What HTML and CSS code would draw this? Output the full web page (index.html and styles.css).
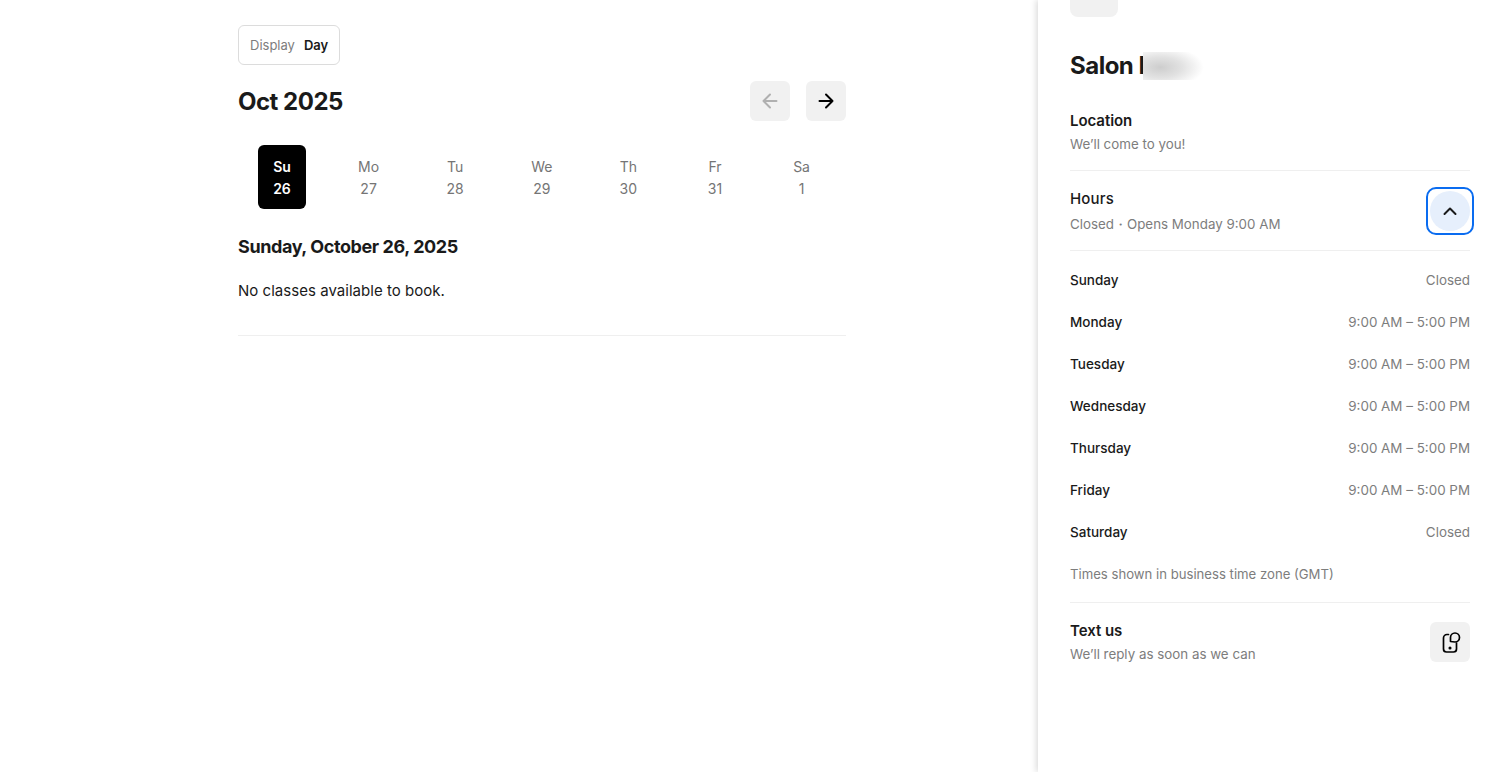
FILE: index.html
```html
<!DOCTYPE html>
<html lang="en">
<head>
<meta charset="utf-8">
<title>Salon</title>
<link rel="stylesheet" href="styles.css">
</head>
<body>
<div class="page">
  <main class="main">
    <div class="display"><span class="display-label">Display</span><span class="display-value">Day</span></div>
    <div class="month-row">
      <h1 class="month">Oct 2025</h1>
      <div class="nav">
        <button class="icon-btn disabled" aria-label="Previous"><svg width="20" height="20" viewBox="0 0 20 20" fill="none" stroke="currentColor" stroke-width="2" stroke-linecap="round" stroke-linejoin="round"><path d="M16.500 10h-13M10 3.500 3.500 10l6.500 6.500"/></svg></button>
        <button class="icon-btn" aria-label="Next"><svg width="20" height="20" viewBox="0 0 20 20" fill="none" stroke="currentColor" stroke-width="2" stroke-linecap="round" stroke-linejoin="round"><path d="M3.500 10h13M10 3.500l6.500 6.500-6.500 6.500"/></svg></button>
      </div>
    </div>
    <div class="week">
      <div class="day active"><span>Su</span><span>26</span></div>
      <div class="day"><span>Mo</span><span>27</span></div>
      <div class="day"><span>Tu</span><span>28</span></div>
      <div class="day"><span>We</span><span>29</span></div>
      <div class="day"><span>Th</span><span>30</span></div>
      <div class="day"><span>Fr</span><span>31</span></div>
      <div class="day"><span>Sa</span><span>1</span></div>
    </div>
    <h2 class="date">Sunday, October 26, 2025</h2>
    <p class="empty">No classes available to book.</p>
    <hr class="rule">
  </main>
  <aside class="side">
    <div class="tile"></div>
    <div class="name-wrap">
      <h2 class="name">Salon I</h2>
      <div class="blur"></div>
    </div>
    <section class="block location">
      <div class="title">Location</div>
      <div class="sub">We’ll come to you!</div>
    </section>
    <section class="block hours">
      <div class="hours-text">
        <div class="title regular">Hours</div>
        <div class="sub wide">Closed・Opens Monday 9:00 AM</div>
      </div>
      <button class="toggle" aria-label="Collapse hours"><span class="toggle-circle"><svg width="20" height="20" viewBox="0 0 20 20" fill="none" stroke="currentColor" stroke-width="2" stroke-linecap="round" stroke-linejoin="round"><path d="M4.500 13 10 7.500l5.500 5.500"/></svg></span></button>
    </section>
    <div class="schedule">
      <div class="row"><span class="d">Sunday</span><span class="t">Closed</span></div>
      <div class="row"><span class="d">Monday</span><span class="t">9:00 AM – 5:00 PM</span></div>
      <div class="row"><span class="d">Tuesday</span><span class="t">9:00 AM – 5:00 PM</span></div>
      <div class="row"><span class="d">Wednesday</span><span class="t">9:00 AM – 5:00 PM</span></div>
      <div class="row"><span class="d">Thursday</span><span class="t">9:00 AM – 5:00 PM</span></div>
      <div class="row"><span class="d">Friday</span><span class="t">9:00 AM – 5:00 PM</span></div>
      <div class="row"><span class="d">Saturday</span><span class="t">Closed</span></div>
      <div class="note">Times shown in business time zone (GMT)</div>
    </div>
    <section class="text-us">
      <div>
        <div class="title">Text us</div>
        <div class="sub">We’ll reply as soon as we can</div>
      </div>
      <button class="icon-btn" aria-label="Text us"><svg width="24" height="24" viewBox="0 0 24 24" fill="none" stroke="currentColor" stroke-width="1.700" stroke-linecap="round" stroke-linejoin="round"><path d="M10.500 4.500H9A3.500 3.500 0 0 0 5.500 8v11A3 3 0 0 0 8.500 22h7a3 3 0 0 0 3-3v-6"/><path d="M12.500 11.500V7.500A4.500 4.500 0 1 1 17 12z"/><circle cx="12" cy="18" r=".7" fill="currentColor"/></svg></button>
    </section>
  </aside>
</div>
</body>
</html>
```
FILE: styles.css
```css
* { box-sizing: border-box; }
html, body { margin: 0; height: 100%; overflow: hidden; background: #fff; }
body { font-family: Inter, "Liberation Sans", sans-serif; color: #1a1a1a; }
button { font: inherit; border: 0; padding: 0; cursor: pointer; }
h1, h2, p { margin: 0; }

.page { display: flex; justify-content: space-between; height: 772px; }

.main { width: 608px; margin-left: 238px; padding-top: 25px; }
.display { display: inline-flex; align-items: center; gap: 9px; height: 40px; padding: 0 11px; border: 1px solid #dcdcdc; border-radius: 6px; font-size: 13px; line-height: 18px; }
.display-label { color: #7d7d7d; }
.display-value { font-weight: 600; }

.month-row { display: flex; justify-content: space-between; align-items: center; height: 40px; margin-top: 16px; }
.month { padding-top: 2px; font-size: 24px; line-height: 32px; font-weight: 700; letter-spacing: -0.5px; }
.nav { display: flex; gap: 16px; }
.icon-btn { display: flex; align-items: center; justify-content: center; width: 40px; height: 40px; border-radius: 6px; background: #f1f1f1; color: #000; }
.icon-btn.disabled { color: #b0b0b0; }

.week { display: grid; grid-template-columns: repeat(7, 86.600px); margin: 24px 0 0 0.700px; }
.day { display: flex; flex-direction: column; align-items: center; justify-content: center; gap: 4px; width: 48px; height: 64px; padding-top: 1px; justify-self: center; border-radius: 6px; font-size: 14px; line-height: 18px; color: #757575; }
.day.active { background: #000; color: #fff; font-weight: 600; }

.date { margin-top: 26px; font-size: 18px; line-height: 24px; font-weight: 700; letter-spacing: -0.41px; }
.empty { margin-top: 20px; font-size: 15px; line-height: 24px; letter-spacing: 0.03px; }
.rule { margin: 32px 0 0; border: 0; border-top: 1px solid #efefef; }

.side { position: relative; width: 448px; padding: 0 16px 0 32px; box-shadow: -2px 0 6px rgba(0, 0, 0, 0.14); overflow: hidden; background: #fff; }
.tile { width: 48px; height: 48px; margin-top: -31px; border-radius: 8px; background: #f1f1f1; }
.name-wrap { position: relative; margin-top: 33px; }
.name { font-size: 24px; line-height: 32px; font-weight: 700; letter-spacing: -0.5px; }
.blur { position: absolute; left: 73px; top: 2px; width: 62px; height: 28px; background: radial-gradient(ellipse 70% 75% at 28% 55%, #cdcdcd 0%, #e2e2e2 50%, #fff 100%); }

.title { font-size: 15px; line-height: 20px; font-weight: 600; letter-spacing: -0.05px; }
.title.regular { font-weight: 500; letter-spacing: 0.15px; }
.sub { margin-top: 3px; font-size: 13.350px; line-height: 20px; color: #7d7d7d; }
.sub.wide { margin-top: 5px; }

.block { width: 400px; border-bottom: 1px solid #efefef; }
.location { margin-top: 29px; height: 60px; }
.hours { display: flex; justify-content: space-between; align-items: center; height: 80px; }
.hours-text { align-self: flex-start; padding-top: 18px; }
.toggle { display: flex; align-items: center; justify-content: center; width: 48px; height: 48px; margin-right: -4px; border: 2px solid #0a6cf0; border-radius: 10px; background: #fff; color: #1a1a1a; }
.toggle-circle { display: flex; align-items: center; justify-content: center; flex: none; width: 40px; height: 40px; border-radius: 50%; background: #e6effc; }

.schedule { width: 400px; padding-top: 8px; border-bottom: 1px solid #efefef; }
.row { display: flex; justify-content: space-between; align-items: center; height: 42px; }
.d { font-size: 13.500px; font-weight: 500; }
.t { font-size: 13.400px; color: #7d7d7d; }
.note { height: 49px; padding-top: 11px; font-size: 13.150px; line-height: 20px; color: #7d7d7d; }

.text-us { display: flex; justify-content: space-between; align-items: center; width: 400px; padding-top: 18px; }
.text-us .icon-btn { margin-top: -2px; }
```
